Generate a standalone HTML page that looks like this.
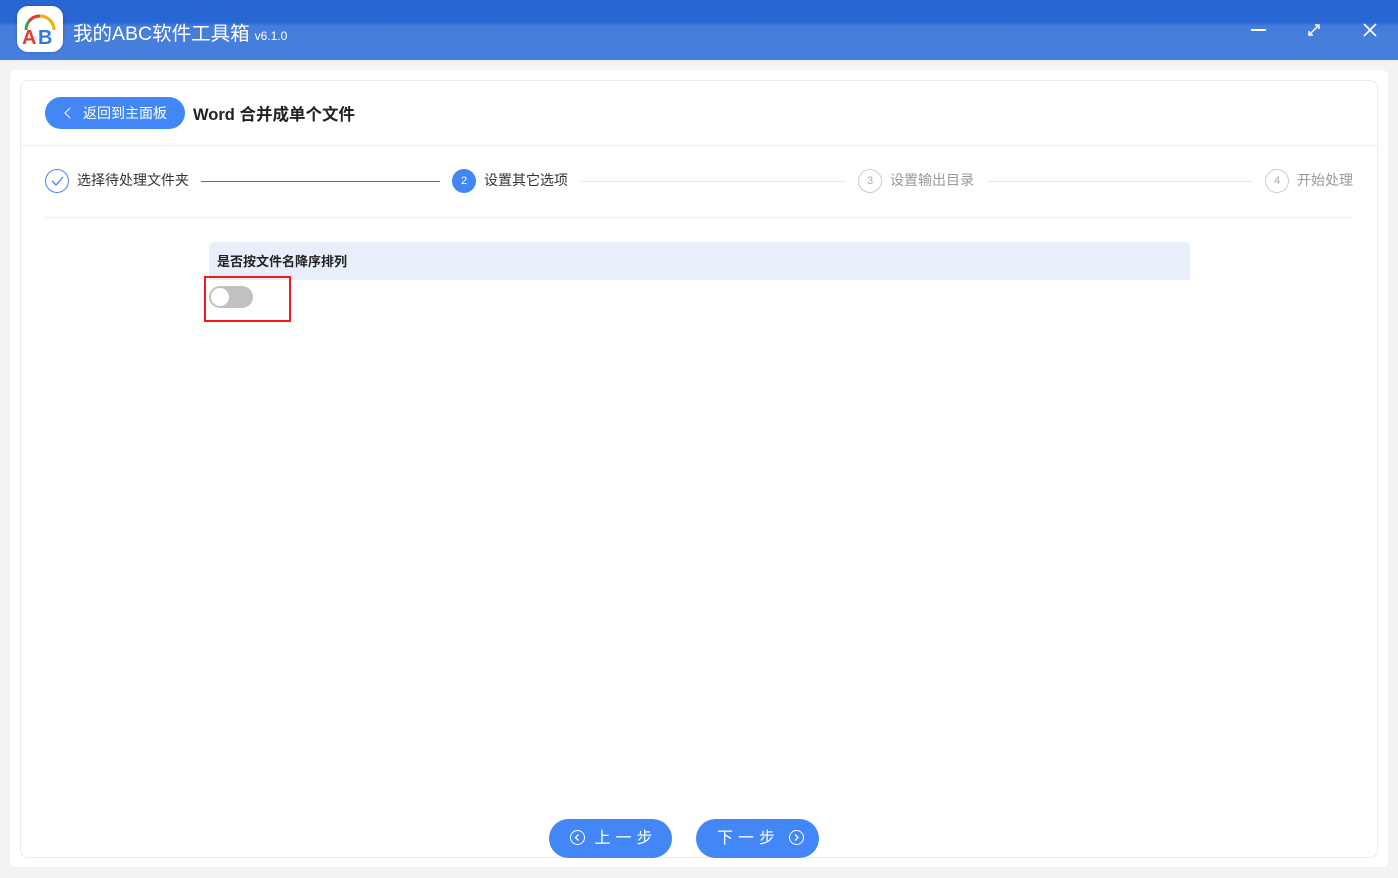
<!DOCTYPE html>
<html><head><meta charset="utf-8"><style>
*{margin:0;padding:0;box-sizing:border-box}
body{width:1398px;height:878px;background:#f3f3f3;font-family:"Liberation Sans","Noto Sans CJK SC",sans-serif;position:relative;overflow:hidden}
.hdr{position:absolute;left:0;top:0;width:1398px;height:60px;background:linear-gradient(#2866d3 0,#2866d3 22px,#457ddc 26px,#477fdc 60px)}
.logo{position:absolute;left:17px;top:6px;width:46px;height:46px;border-radius:11px;background:#fff;box-shadow:0 0 3px rgba(0,0,0,.2)}
.title{position:absolute;left:73px;top:17px;color:#fff;font-size:19.5px}
.ver{font-size:12px;margin-left:5px}
.card{position:absolute;left:10px;top:70px;width:1378px;height:797px;background:#fff;border-radius:6px}
.inner{position:absolute;left:20px;top:80px;width:1358px;height:778px;border:1px solid #ebebeb;border-radius:8px}
.back{position:absolute;left:45px;top:97px;width:140px;height:32px;border-radius:16px;background:#4287f5;color:#fff;font-size:14px;line-height:32px;padding-left:38px}
.back:before{content:"";position:absolute;left:21px;top:12px;width:7px;height:7px;border-left:1.5px solid #fff;border-bottom:1.5px solid #fff;transform:rotate(45deg)}
.h1{position:absolute;left:193px;top:101px;font-size:16.5px;font-weight:bold;color:#222}
.sep{position:absolute;left:21px;top:145px;width:1356px;height:1px;background:#efefef}
.circ{position:absolute;width:24px;height:24px;border-radius:50%;font-size:11px;text-align:center;line-height:22px}
.st{position:absolute;top:170px;font-size:14px}
.ln{position:absolute;top:181px;height:1px}
.opt{position:absolute;left:209px;top:242px;width:981px;height:38px;background:#e7effb;border-radius:6px 6px 0 0;font-size:13px;font-weight:bold;color:#222;padding:9px 8px}
.red{position:absolute;left:204px;top:276px;width:87px;height:46px;border:2px solid #f01c1c}
.tog{position:absolute;left:209px;top:286px;width:44px;height:22px;border-radius:11px;background:#c1c1c1}
.tog:after{content:"";position:absolute;left:2px;top:2px;width:18px;height:18px;border-radius:50%;background:#fff}
.btn{position:absolute;top:819px;width:123px;height:39px;border-radius:20px;background:#4287f5;color:#fff;font-size:16px;line-height:39px;letter-spacing:5px}
.ci{display:inline-block;width:15px;height:15px;border:1.5px solid #fff;border-radius:50%;vertical-align:-2px;position:relative}
</style></head><body>
<div class="hdr"></div>
<div class="logo"><svg width="46" height="46" viewBox="0 0 46 46"><path d="M9 24 A14 14 0 0 1 37 24" fill="none" stroke="#2faa4a" stroke-width="3"/><path d="M23 10 A14 14 0 0 1 37 24" fill="none" stroke="#f5b400" stroke-width="3"/><path d="M23 10 A14 14 0 0 0 12 15" fill="none" stroke="#e53935" stroke-width="3"/><text x="5" y="38" font-size="20" font-weight="bold" fill="#e53935" font-family="Liberation Sans">A</text><text x="21" y="38" font-size="20" font-weight="bold" fill="#2f7be0" font-family="Liberation Sans">B</text></svg></div>
<div class="title">我的ABC软件工具箱<span class="ver">v6.1.0</span></div>
<div style="position:absolute;left:1251px;top:29px;width:15px;height:1.5px;background:#fff"></div>
<svg style="position:absolute;left:1306px;top:22px" width="16" height="16" viewBox="0 0 16 16"><path d="M3 13L13 3M9 3h4v4M3 9v4h4" stroke="#fff" stroke-width="1.5" fill="none"/></svg>
<svg style="position:absolute;left:1362px;top:22px" width="16" height="16" viewBox="0 0 16 16"><path d="M2 2L14 14M14 2L2 14" stroke="#fff" stroke-width="1.6"/></svg>
<div class="card"></div>
<div class="inner"></div>
<div class="back">返回到主面板</div>
<div class="h1">Word 合并成单个文件</div>
<div class="sep"></div>
<div class="circ" style="left:45px;top:169px;border:1px solid #4287f5"><svg width="22" height="22" viewBox="0 0 22 22"><path d="M6 11l4 4 7-8" stroke="#4287f5" stroke-width="1.3" fill="none"/></svg></div>
<div class="st" style="left:77px;color:#333">选择待处理文件夹</div>
<div class="ln" style="left:201px;width:239px;background:#3d6fbf"></div>
<div class="circ" style="left:452px;top:169px;background:#4287f5;color:#fff;line-height:24px">2</div>
<div class="st" style="left:484px;color:#333">设置其它选项</div>
<div class="ln" style="left:581px;width:265px;background:#e8e8e8"></div>
<div class="circ" style="left:858px;top:169px;border:1px solid #ccc;color:#aaa">3</div>
<div class="st" style="left:890px;color:#999">设置输出目录</div>
<div class="ln" style="left:987px;width:266px;background:#e8e8e8"></div>
<div class="circ" style="left:1265px;top:169px;border:1px solid #ccc;color:#aaa">4</div>
<div class="st" style="left:1297px;color:#999">开始处理</div>
<div class="sep" style="left:45px;width:1308px;top:217px"></div>
<div class="opt">是否按文件名降序排列</div>
<div class="tog"></div>
<div class="red"></div>
<div class="btn" style="left:549px;padding-left:21px"><span class="ci"><svg style="position:absolute;left:2px;top:2px" width="9" height="9" viewBox="0 0 9 9"><path d="M5.5 1.5L2.5 4.5 5.5 7.5" stroke="#fff" stroke-width="1.3" fill="none"/></svg></span> 上一步</div>
<div class="btn" style="left:696px;padding-left:21px">下一步 <span class="ci"><svg style="position:absolute;left:2px;top:2px" width="9" height="9" viewBox="0 0 9 9"><path d="M3 1.5L6 4.5 3 7.5" stroke="#fff" stroke-width="1.3" fill="none"/></svg></span></div>
</body></html>
